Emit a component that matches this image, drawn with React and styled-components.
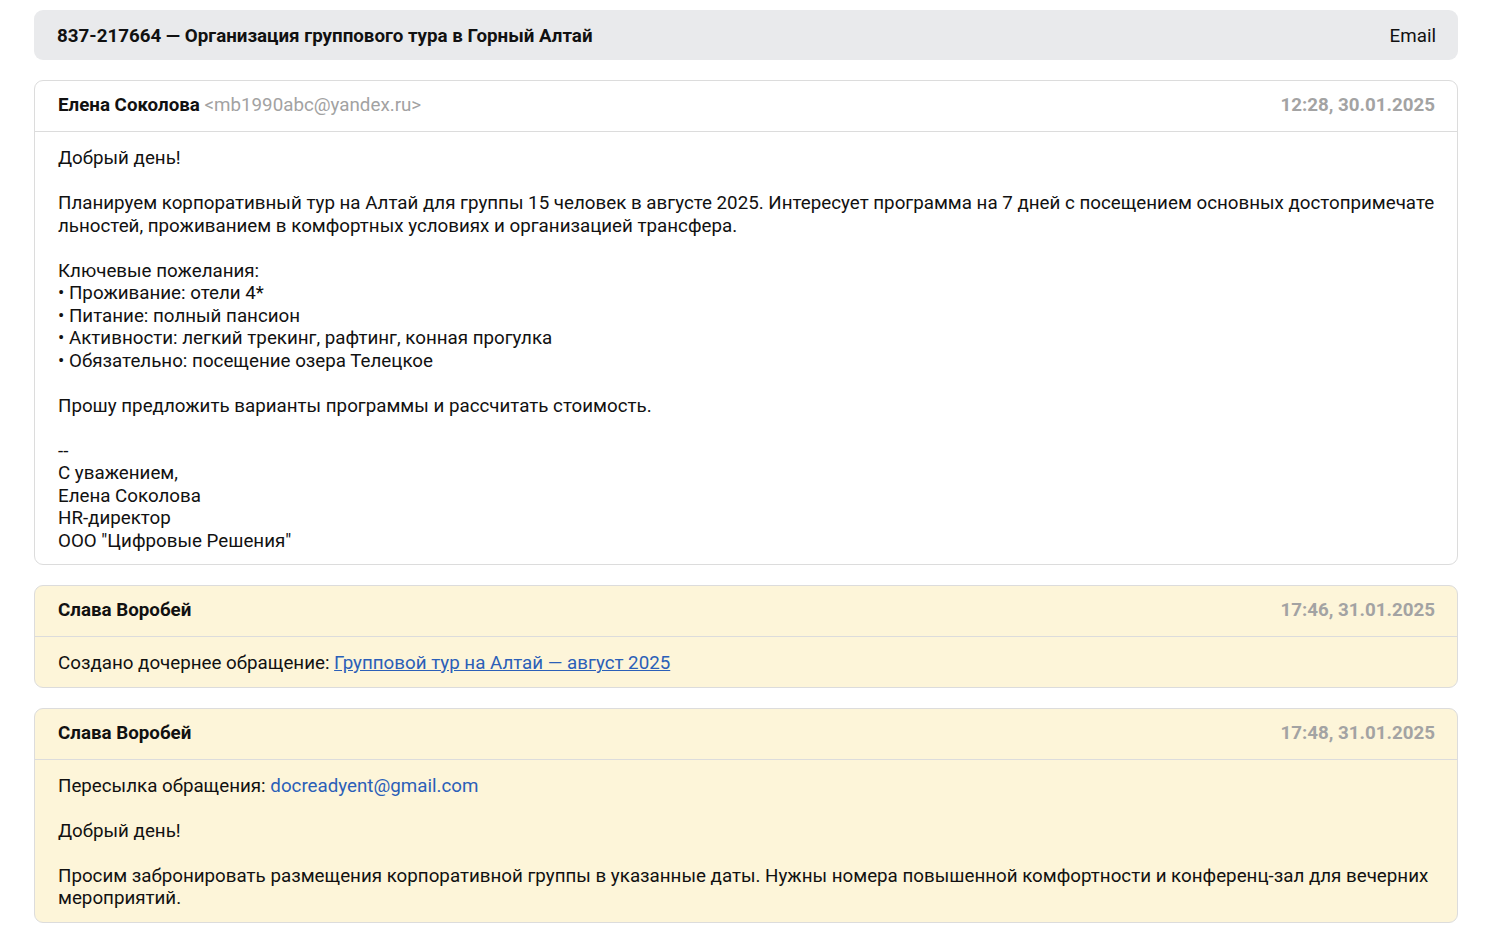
import React from "react";
import styled, { createGlobalStyle } from "styled-components";

const GlobalStyle = createGlobalStyle`
  body {
    margin: 0;
    background: #fff;
    font-family: Roboto, "Noto Sans", Arial, sans-serif;
    color: #111;
  }
`;

const Page = styled.div`
  padding: 10px 36px 18px 34px;
  display: flex;
  flex-direction: column;
  gap: 20px;
`;

const TitleBar = styled.div`
  background: #e9eaec;
  border-radius: 9px;
  height: 50px;
  box-sizing: border-box;
  padding: 2px 22px 0 23px;
  display: flex;
  align-items: center;
  justify-content: space-between;
  font-size: 18.75px;
`;

const Title = styled.span`
  font-weight: 700;
`;

const Card = styled.div`
  border: 1px solid #dcdcdc;
  border-radius: 9px;
  background: ${p => (p.$note ? "#fdf5d9" : "#fff")};
  overflow: hidden;
`;

const CardHead = styled.div`
  display: flex;
  justify-content: space-between;
  align-items: center;
  height: 22px;
  padding: 13px 22px 15px 23px;
  border-bottom: 1px solid #dcdcdc;
  font-size: 18.75px;
  line-height: 22px;
`;

const Author = styled.span`
  font-weight: 700;
`;

const Address = styled.span`
  color: #a2a2a2;
`;

const Stamp = styled.span`
  color: #a3a3a3;
  font-weight: 700;
`;

const CardBody = styled.div`
  padding: 15px 21px 12px 23px;
  font-size: 18.75px;
  line-height: 22.5px;
  white-space: pre-wrap;
  word-break: break-all;
`;

const Link = styled.a`
  color: #2b5fb8;
  text-decoration: ${p => (p.$plain ? "none" : "underline")};
`;

const firstLetter = `Добрый день!

Планируем корпоративный тур на Алтай для группы 15 человек в августе 2025. Интересует программа на 7 дней с посещением основных достопримечательностей, проживанием в комфортных условиях и организацией трансфера.

Ключевые пожелания:
• Проживание: отели 4*
• Питание: полный пансион
• Активности: легкий трекинг, рафтинг, конная прогулка
• Обязательно: посещение озера Телецкое

Прошу предложить варианты программы и рассчитать стоимость.

--
С уважением,
Елена Соколова
HR-директор
ООО "Цифровые Решения"`;

const forwarded = `

Добрый день!

Просим забронировать размещения корпоративной группы в указанные даты. Нужны номера повышенной комфортности и конференц-зал для вечерних мероприятий.`;

export default function App() {
  return (
    <>
      <GlobalStyle />
      <Page>
        <TitleBar>
          <Title>837-217664 — Организация группового тура в Горный Алтай</Title>
          <span>Email</span>
        </TitleBar>

        <Card>
          <CardHead>
            <span>
              <Author>Елена Соколова</Author>{" "}
              <Address>&lt;mb1990abc@yandex.ru&gt;</Address>
            </span>
            <Stamp>12:28, 30.01.2025</Stamp>
          </CardHead>
          <CardBody>{firstLetter}</CardBody>
        </Card>

        <Card $note>
          <CardHead>
            <Author>Слава Воробей</Author>
            <Stamp>17:46, 31.01.2025</Stamp>
          </CardHead>
          <CardBody>
            Создано дочернее обращение:{" "}
            <Link href="#">Групповой тур на Алтай — август 2025</Link>
          </CardBody>
        </Card>

        <Card $note>
          <CardHead>
            <Author>Слава Воробей</Author>
            <Stamp>17:48, 31.01.2025</Stamp>
          </CardHead>
          <CardBody>
            Пересылка обращения:{" "}
            <Link $plain href="#">docreadyent@gmail.com</Link>
            {forwarded}
          </CardBody>
        </Card>
      </Page>
    </>
  );
}
